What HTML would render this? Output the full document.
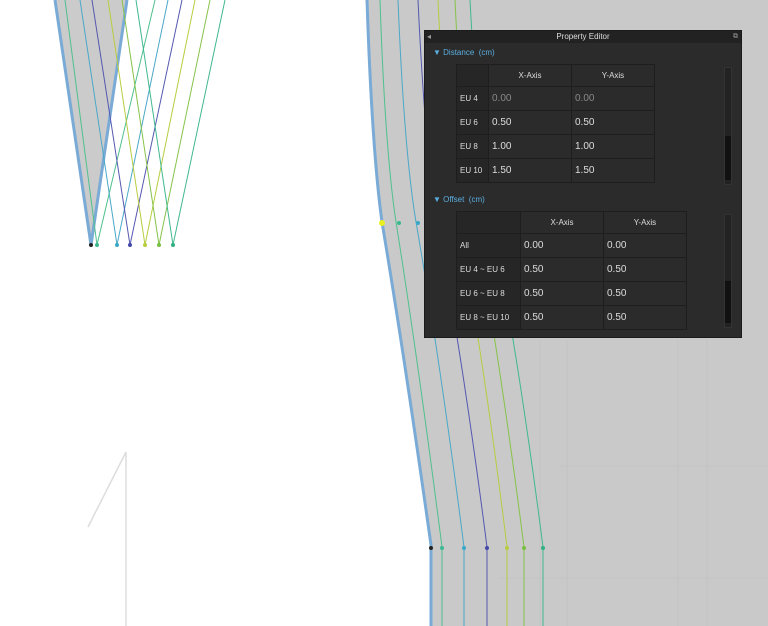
<!DOCTYPE html><html><head><style>
body{margin:0;width:768px;height:626px;overflow:hidden;background:#fff;font-family:"Liberation Sans",sans-serif;position:relative}
svg{position:absolute;left:0;top:0}
.p{position:absolute;left:424px;top:30px;width:318px;height:308px;background:#2b2b2b;border:1px solid #1a1a1a;box-sizing:border-box}
.tb{height:12px;background:#222;color:#ddd;font-size:8px;text-align:center;line-height:12px;position:relative}
.sec{position:absolute;left:8px;color:#5aaee0;font-size:8px}
.t{position:absolute;border-collapse:collapse;font-size:10px;color:#ddd}
.t td{border:1px solid #1e1e1e;padding:0 0 0 3px;height:23px}
.t tr:first-child td{height:21px;text-align:center;font-size:8px;padding:0}
.t td.h{font-size:8px;background:#262626}
.sb{position:absolute;width:6px;background:#222;border:1px solid #333}
.sb i{position:absolute;left:0;right:0;background:#111}
</style></head><body>
<svg width="768" height="626">
<path d="M55,0 L91,245 L127,0Z" fill="#cbcbcb"/>
<path d="M55,0 L91,245 L127,0" fill="none" stroke="#7aaad6" stroke-width="3"/>
<g fill="none" stroke-width="1">
<path d="M65,0 L97,245 L155,0" stroke="#4fc08d"/>
<path d="M80,0 L117,245 L168,0" stroke="#4aa8c8"/>
<path d="M92,0 L130,245 L182,0" stroke="#5558b0"/>
<path d="M108,0 L145,245 L195,0" stroke="#b8cc40"/>
<path d="M122,0 L159,245 L210,0" stroke="#86c34a"/>
<path d="M136,0 L173,245 L225,0" stroke="#40b890" />
</g>
<g>
<circle cx="91" cy="245" r="2" fill="#222"/><circle cx="97" cy="245" r="2" fill="#3cb890"/><circle cx="117" cy="245" r="2" fill="#3aa8c8"/><circle cx="130" cy="245" r="2" fill="#4448a8"/><circle cx="145" cy="245" r="2" fill="#b8cc40"/><circle cx="159" cy="245" r="2" fill="#78c040"/><circle cx="173" cy="245" r="2" fill="#30b080"/>
</g>
<path d="M367,0 Q372,150 382,222 Q405,360 431,545 L431,626 L768,626 L768,0Z" fill="#c9c9c9"/>
<g stroke="#c3c3c3" stroke-width="1"><line x1="540" y1="340" x2="540" y2="626"/><line x1="567" y1="340" x2="567" y2="626"/><line x1="678" y1="340" x2="678" y2="626"/><line x1="707" y1="340" x2="707" y2="626"/><line x1="500" y1="578" x2="768" y2="578"/><line x1="560" y1="466" x2="768" y2="466"/></g>
<path d="M367,0 Q372,150 382,222 Q405,360 431,545 L431,626" fill="none" stroke="#7aaad6" stroke-width="3"/>
<g fill="none">
<path d="M380,0 Q385,150 396,222 Q418,360 442,547 L442,626" stroke="#4fc08d"/>
<path d="M398,0 Q404,150 416,222 Q440,360 464,547 L464,626" stroke="#4aa8c8"/>
<path d="M418,0 Q425,150 437,222 Q463,360 487,547 L487,626" stroke="#5558b0"/>
<path d="M438,0 Q445,150 458,222 Q484,360 507,547 L507,626" stroke="#b8cc40"/>
<path d="M455,0 Q462,150 475,222 Q500,360 524,547 L524,626" stroke="#86c34a"/>
<path d="M470,0 Q478,150 492,222 Q519,360 543,547 L543,626" stroke="#40b890"/>
</g>
<circle cx="382" cy="223" r="3" fill="#e8f020"/><circle cx="399" cy="223" r="2" fill="#3cb890"/><circle cx="418" cy="223" r="2" fill="#3aa8c8"/>
<circle cx="431" cy="548" r="2" fill="#222"/><circle cx="442" cy="548" r="2" fill="#3cb890"/><circle cx="464" cy="548" r="2" fill="#3aa8c8"/><circle cx="487" cy="548" r="2" fill="#4448a8"/><circle cx="507" cy="548" r="2" fill="#b8cc40"/><circle cx="524" cy="548" r="2" fill="#78c040"/><circle cx="543" cy="548" r="2" fill="#30b080"/>
<path d="M88,527 L126,452 L126,626" fill="none" stroke="#ddd" stroke-width="1.5"/>
</svg>
<div class="p">
<div class="tb"><span style="position:absolute;left:2px;color:#999">◂</span>Property Editor<span style="position:absolute;right:3px;color:#999;font-size:7px">⧉</span></div>
<div class="sec" style="top:17px">▼ Distance &nbsp;(cm)</div>
<table class="t" style="left:31px;top:33px">
<tr><td style="width:31px" class="h"></td><td style="width:82px">X-Axis</td><td style="width:82px">Y-Axis</td></tr>
<tr><td class="h">EU 4</td><td style="color:#888">0.00</td><td style="color:#888">0.00</td></tr>
<tr><td class="h">EU 6</td><td>0.50</td><td>0.50</td></tr>
<tr><td class="h">EU 8</td><td>1.00</td><td>1.00</td></tr>
<tr><td class="h">EU 10</td><td>1.50</td><td>1.50</td></tr>
</table>
<div class="sb" style="left:299px;top:36px;height:116px"><i style="top:68px;bottom:4px"></i></div>
<div class="sec" style="top:164px">▼ Offset &nbsp;(cm)</div>
<table class="t" style="left:31px;top:180px">
<tr><td style="width:63px" class="h"></td><td style="width:82px">X-Axis</td><td style="width:82px">Y-Axis</td></tr>
<tr><td class="h">All</td><td>0.00</td><td>0.00</td></tr>
<tr><td class="h">EU 4 ~ EU 6</td><td>0.50</td><td>0.50</td></tr>
<tr><td class="h">EU 6 ~ EU 8</td><td>0.50</td><td>0.50</td></tr>
<tr><td class="h">EU 8 ~ EU 10</td><td>0.50</td><td>0.50</td></tr>
</table>
<div class="sb" style="left:299px;top:183px;height:112px"><i style="top:66px;bottom:4px"></i></div>
</div>
</body></html>
